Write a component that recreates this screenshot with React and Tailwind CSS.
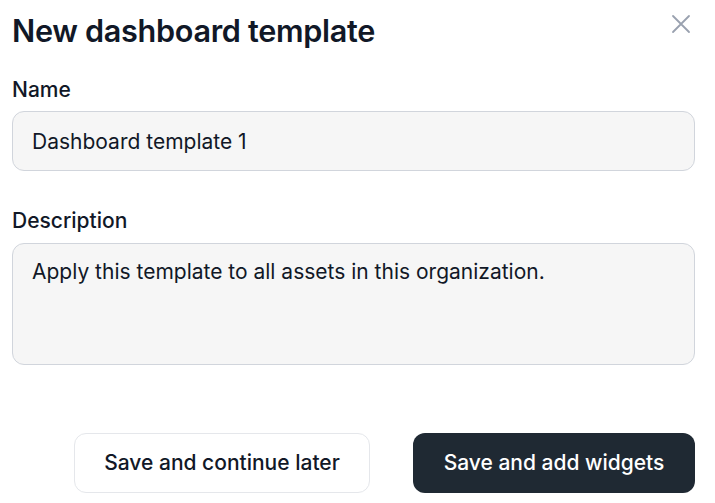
import React from 'react';

export default function App() {
  return (
    <div className="w-[715px] h-[503px] bg-white pl-3 pr-5 pt-[12px] text-[#111827]" style={{ fontFamily: 'Inter, "Noto Sans", sans-serif' }}>
      {/* Header */}
      <div className="flex items-start justify-between">
        <h1 className="text-[30.6px] leading-[38px] font-semibold tracking-[-0.01em]">New dashboard template</h1>
        <button className="mt-[2px] mr-[4px] text-gray-400">
          <svg width="20" height="20" viewBox="0 0 20 20" fill="none" stroke="currentColor" strokeWidth="1.8" strokeLinecap="round">
            <path d="M2 2L18 18M18 2L2 18" />
          </svg>
        </button>
      </div>

      {/* Name */}
      <div className="mt-[27px]">
        <label className="block text-[21px] leading-[26px] font-medium">Name</label>
        <input
          defaultValue="Dashboard template 1"
          className="mt-[8px] w-full h-[60px] rounded-xl border border-gray-300 bg-[#f6f6f6] px-[19px] text-[21px] text-[#111827] outline-none"
        />
      </div>

      {/* Description */}
      <div className="mt-[37px]">
        <label className="block text-[21px] leading-[26px] font-medium">Description</label>
        <textarea
          defaultValue="Apply this template to all assets in this organization."
          className="mt-[9px] block w-full h-[122px] resize-none rounded-xl border border-gray-300 bg-[#f6f6f6] px-[19px] pt-[14px] text-[21px] leading-7 text-[#111827] outline-none"
        />
      </div>

      {/* Actions */}
      <div className="mt-[68px] flex justify-end gap-[43px]">
        <button className="w-[296px] h-[60px] rounded-xl border border-gray-200 bg-white text-[21px] font-medium text-[#111827]">
          Save and continue later
        </button>
        <button className="w-[282px] h-[60px] rounded-xl bg-[#1f2933] text-[21px] font-medium text-white">
          Save and add widgets
        </button>
      </div>
    </div>
  );
}
